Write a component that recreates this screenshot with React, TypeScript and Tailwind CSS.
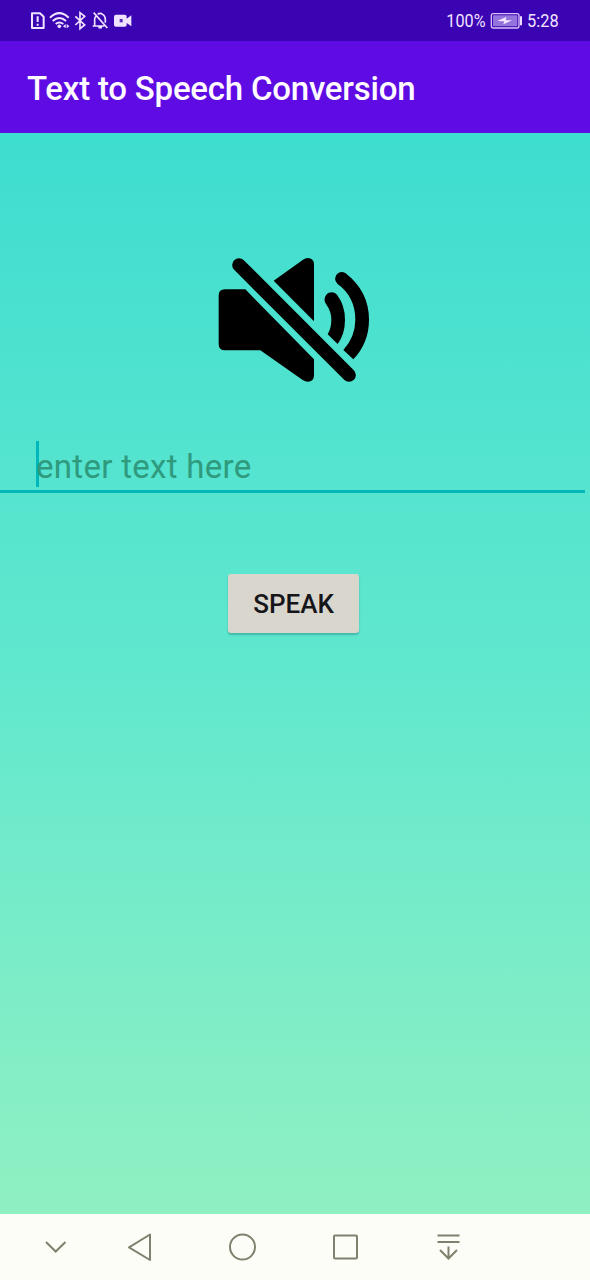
import React from "react";

function StatusIcons() {
  return (
    <svg width="130" height="42" viewBox="0 0 390 126" fill="none" stroke="#f0e3ff" strokeWidth="6" aria-hidden="true">
      <path d="M36 40H60L71 50V84H36Z" strokeLinejoin="round" />
      <path d="M53 49V66M53 71V77" />
      <path d="M90 53Q118 26 146 53M98 63Q118 45 138 63M107 72Q118 63 130 72" />
      <circle cx="118" cy="79" r="5.500" fill="#f0e3ff" stroke="none" />
      <path d="M137 72V85L129 78.500ZM140 72V85L148 78.500Z" fill="#f0e3ff" stroke="none" />
      <path d="M166 49L194 75L180 86V38L194 49L166 75" strokeWidth="5" />
      <path d="M221 38L262 84M218 78H253M224 77V58Q224 51 229 48M233 43Q240 37 248 43Q256 48 256 58V68M235 83H246" strokeWidth="5" />
      <path d="M288 44H314Q320 44 320 50V56L334 46V79L320 69V75Q320 80 314 80H288Q282 80 282 75V50Q282 44 288 44Z" fill="#f0e3ff" stroke="none" />
      <rect x="299" y="57" width="9" height="10" fill="#5a2bc2" stroke="none" />
    </svg>
  );
}

function BatteryIcon() {
  return (
    <svg width="33" height="18" viewBox="0 0 99 54" fill="none" aria-hidden="true">
      <rect x="4" y="5" width="83" height="43" rx="6" stroke="#d8c2f8" strokeWidth="4" />
      <rect x="9" y="10" width="73" height="33" rx="2" fill="#9573dc" />
      <path d="M22 27L49 15L47 25H66L40 37L43 28Z" fill="#f5eaff" />
      <path d="M93 13V40" stroke="#ecdcff" strokeWidth="6" />
    </svg>
  );
}

function MutedSpeaker() {
  return (
    <svg width="180" height="150" viewBox="0 0 540 450" className="block" aria-label="Speaker muted">
      <path d="M60 133H121L327 343V391Q327 410 308 410Q301 410 293 405L166 316H60Q41 316 41 297V152Q41 133 60 133Z" />
      <path d="M206 107L294 44Q301 39 308 39Q327 39 327 59V229Z" />
      <path d="M102 60L432 390" stroke="black" strokeWidth="41" strokeLinecap="round" />
      <path d="M368 268L398 297Q420 267 420 224Q420 182 397 151C390 140 374 139 364 149C357 157 357 168 363 177Q379 199 379 224Q379 249 368 268Z" />
      <path d="M415 315L445 343Q492 293 492 224Q492 139 421 84Q407 76 396 87Q384 102 397 116Q451 155 451 224Q451 275 415 315Z" />
    </svg>
  );
}

function NavigationBar() {
  return (
    <nav className="h-[66px] bg-[#fdfdf7]">
      <svg width="590" height="66" viewBox="0 0 590 66" fill="none" stroke="#80806e" strokeWidth="2" className="block" aria-hidden="true">
        <path d="M46 28L55.700 37.500L65.500 28" />
        <path d="M150 20.500V46L129 33.300Z" strokeLinejoin="round" />
        <circle cx="242.500" cy="33" r="12.500" />
        <rect x="334" y="21.500" width="23" height="23" rx="1" />
        <path d="M437.500 21.500H459.500M437.500 28H459.500M448.500 32.500V44.500M440 36L448.500 44.500L457 36" />
      </svg>
    </nav>
  );
}

export default function App() {
  return (
    <div className="flex h-[1280px] w-[590px] flex-col overflow-hidden font-['Roboto',sans-serif]">
      <div className="flex h-[41px] items-center justify-between bg-[#3b04b3] pl-5 pr-[30px] text-[18px] text-[#f0e3ff]">
        <StatusIcons />
        <div className="flex items-center">
          <span className="origin-right scale-x-[0.9]">100%</span>
          <span className="ml-1 flex"><BatteryIcon /></span>
          <span className="ml-1 w-[33px] origin-left scale-x-[0.91] whitespace-nowrap">5:28</span>
        </div>
      </div>
      <header className="flex h-[92px] items-center bg-[#5e0be4] pl-[27px] pt-0.5">
        <h1 className="whitespace-nowrap text-[33px] font-medium leading-none tracking-[-0.22px] text-[#fffaff]">Text to Speech Conversion</h1>
      </header>
      <main className="flex flex-1 flex-col items-center bg-linear-to-b from-[#3dddd0] via-[#60e8ce] to-[#8ff0c2] pt-[112px]">
        <MutedSpeaker />
        <div className="mt-[46px] flex h-[52px] w-[585px] self-start border-b-[3px] border-[#00b8bb] pl-[36px]">
          <span className="h-[46px] w-[3px] shrink-0 bg-[#00b8bb]" />
          <span className="-ml-[3px] mt-[3px] whitespace-nowrap text-[33px] leading-[46px] tracking-[0.3px] text-[#2f9a7d]">enter text here</span>
        </div>
        <button className="mr-[3px] mt-[81px] h-[59px] w-[131px] rounded-[3px] bg-[#d9d7cd] pt-px text-[26px] font-medium text-[#15151a] shadow-[0_2px_2px_rgba(0,80,90,0.3)]">SPEAK</button>
      </main>
      <NavigationBar />
    </div>
  );
}
